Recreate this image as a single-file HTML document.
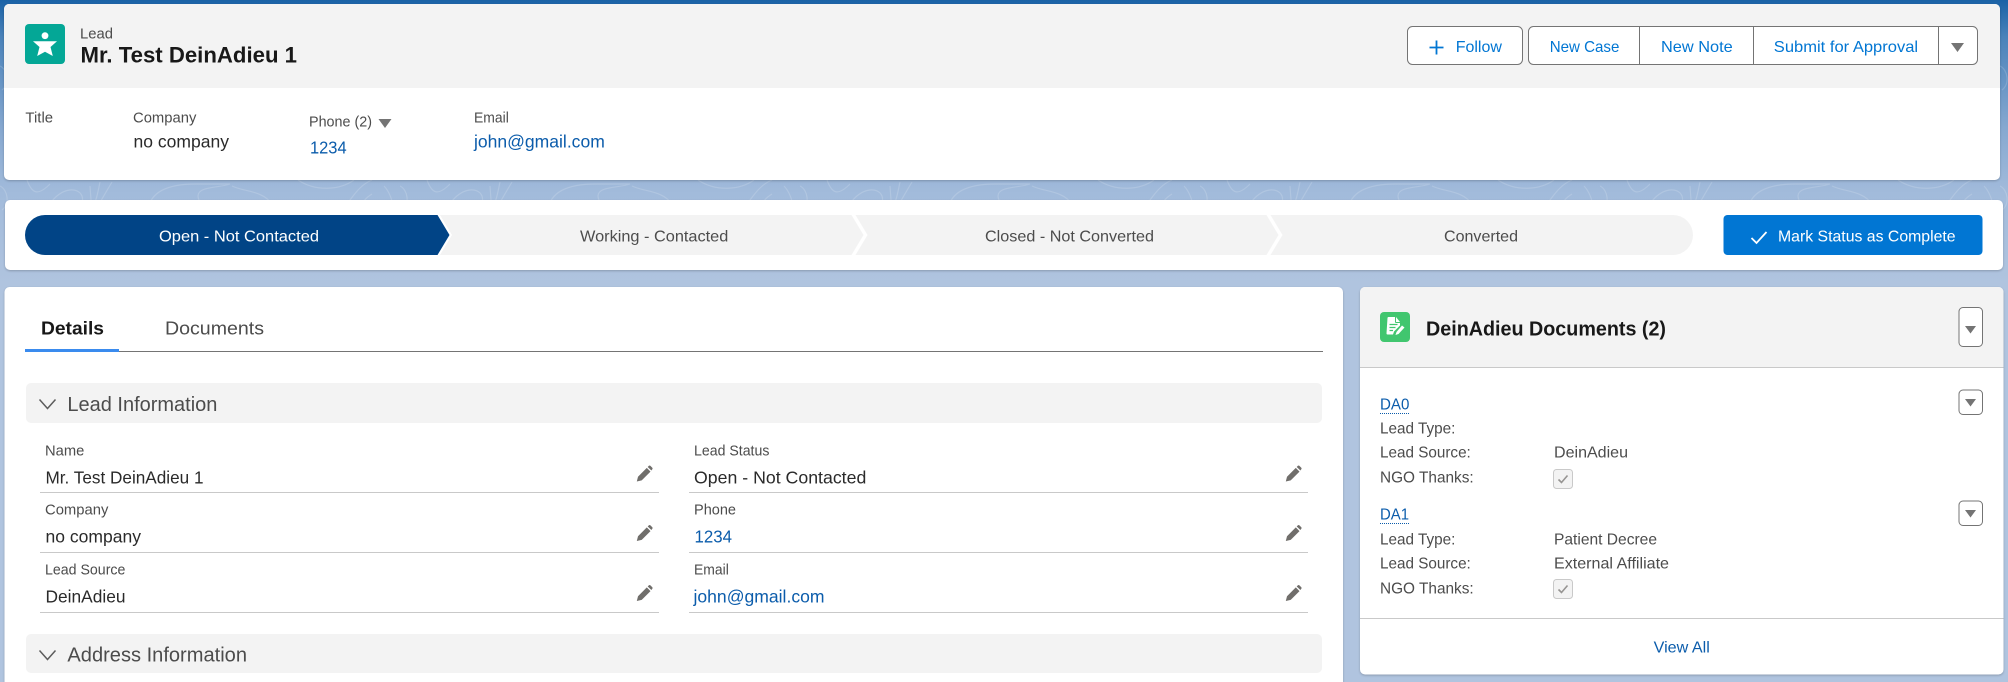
<!DOCTYPE html>
<html lang="en">
<head>
<meta charset="utf-8">
<title>Lead - Mr. Test DeinAdieu 1</title>
<style>
html,body{margin:0;padding:0;width:2008px;height:682px;overflow:hidden;background:#b0c4df}
svg{display:block;font-family:"Liberation Sans",sans-serif}
text{transform:translateY(-.7px)}
.l{font-size:15px;fill:#4c4c4c}
.v{font-size:17.5px;fill:#2a2a2a}
.a{font-size:17.5px;fill:#0b5cab}
.b{font-size:16px;fill:#0176d3}
.s{font-size:16px;fill:#4c4c4c}
.d{font-size:16px;fill:#4c4c4c}
.h{font-size:20px;fill:#4c4c4c}
.card{filter:drop-shadow(0 1.5px 1px rgba(0,0,0,.22))}
</style>
</head>
<body>
<svg width="2008" height="682" viewBox="0 0 2008 682" xmlns="http://www.w3.org/2000/svg">
<defs>
<linearGradient id="bg" x1="0" y1="0" x2="0" y2="1">
<stop offset="0" stop-color="#1a62a6"/>
<stop offset=".13" stop-color="#4a82ba"/>
<stop offset=".45" stop-color="#86a8d0"/>
<stop offset=".68" stop-color="#a2bbdb"/>
<stop offset="1" stop-color="#b0c4df"/>
</linearGradient>
<pattern id="topo" width="400" height="120" patternUnits="userSpaceOnUse" y="160">
<g fill="none" stroke="#fff" stroke-opacity=".16" stroke-width="1.2">
<path d="M0 26C8 30 10 44 2 50M27 20C32 34 38 36 50 24M50 44C60 28 78 26 82 36C84 42 80 48 78 60"/>
<path d="M90 26L91 40M100 22C98 32 96 42 92 50M112 22C106 32 100 42 96 50"/>
<path d="M148 50C150 34 164 24 196 24L230 24C220 28 198 26 198 36C198 44 210 50 216 50"/>
<path d="M165 50C172 38 186 40 196 50"/>
<path d="M232 26C244 32 262 30 272 44L278 54"/>
<path d="M298 20C316 32 340 30 354 20M300 50C320 44 340 50 350 40C356 32 362 24 372 20M372 34C362 40 362 46 358 52M394 50C392 38 388 30 384 26"/>
</g>
</pattern>
<linearGradient id="fade" x1="0" y1="0" x2="0" y2="1">
<stop offset="0" stop-color="#fff"/><stop offset=".72" stop-color="#fff"/><stop offset="1" stop-color="#000"/>
</linearGradient>
<mask id="m"><rect width="2008" height="290" fill="url(#fade)"/></mask>
<g id="pen"><path fill="#706e6b" d="M.3 16l1.2-4.8L10.3 2.4l3.7 3.7-8.8 8.8zM11.2 1.5L12.4.3c.4-.4 1-.4 1.4 0l2 2c.4.4.4 1 0 1.4L14.9 5z"/></g>
<path id="tri" fill="#747474" d="M0 0h13l-6.5 9z"/>
<g id="cb"><rect x="1.5" y=".5" width="19" height="19" rx="3" fill="#f3f3f3" stroke="#c9c9c9"/><path d="M6.5 10.5l3 3 6-7" fill="none" stroke="#969492" stroke-width="1.6"/></g>
<g id="ib"><rect x="1959" y="0" width="23.5" height="24.5" rx="4" fill="#fff" stroke="#747474"/><path fill="#747474" d="M1965 9h11l-5.500 7.500z"/></g>
</defs>

<!-- Page background -->
<rect width="2008" height="682" fill="#b0c4df"/>
<rect width="2008" height="285" fill="url(#bg)"/>
<rect width="2008" height="285" fill="url(#topo)" mask="url(#m)"/>

<!-- Highlights card -->
<rect class="card" x="4" y="4" width="1996" height="176" rx="5" fill="#fff"/>
<path d="M4 88V9a5 5 0 0 1 5-5H1995a5 5 0 0 1 5 5V88z" fill="#f3f3f3"/>
<rect x="25" y="24" width="40" height="40" rx="4" fill="#04a796"/>
<circle cx="45" cy="35.700" r="3.400" fill="#fff"/>
<path fill="#fff" d="M33 41.300H57L50.500 47 52.800 56 45 51.800 37.200 56 39.500 47z"/>
<text class="l" x="80" y="39" textLength="33" lengthAdjust="spacingAndGlyphs">Lead</text>
<text x="80.500" y="63.200" font-size="22.500" font-weight="700" fill="#181818" textLength="216.500" lengthAdjust="spacingAndGlyphs">Mr. Test DeinAdieu 1</text>

<rect x="1407.500" y="26.500" width="115" height="38" rx="5" fill="#fff" stroke="#747474"/>
<path d="M1436.500 40.500v14M1429.500 47.500h14" stroke="#0176d3" stroke-width="1.800" fill="none"/>
<text class="b" x="1455.700" y="52.500" textLength="46.200" lengthAdjust="spacingAndGlyphs">Follow</text>
<rect x="1528.500" y="26.500" width="449" height="38" rx="5" fill="#fff" stroke="#747474"/>
<path d="M1639.500 26.500v38M1753.500 26.500v38M1938.500 26.500v38" stroke="#747474"/>
<text class="b" x="1549.700" y="52.500" textLength="69.700" lengthAdjust="spacingAndGlyphs">New Case</text>
<text class="b" x="1661" y="52.500" textLength="71.700" lengthAdjust="spacingAndGlyphs">New Note</text>
<text class="b" x="1773.800" y="52.500" textLength="144.300" lengthAdjust="spacingAndGlyphs">Submit for Approval</text>
<use href="#tri" x="1951" y="43"/>

<text class="l" x="25.400" y="123.300" textLength="27.700" lengthAdjust="spacingAndGlyphs">Title</text>
<text class="l" x="133" y="123.300" textLength="63.400" lengthAdjust="spacingAndGlyphs">Company</text>
<text class="v" x="133.500" y="148.300" textLength="95.500" lengthAdjust="spacingAndGlyphs">no company</text>
<text class="l" x="309" y="127.300" textLength="63" lengthAdjust="spacingAndGlyphs">Phone (2)</text>
<use href="#tri" x="378.500" y="119"/>
<text class="a" x="310" y="154" textLength="36.600" lengthAdjust="spacingAndGlyphs">1234</text>
<text class="l" x="474" y="123.300" textLength="34.800" lengthAdjust="spacingAndGlyphs">Email</text>
<text class="a" x="474" y="148.300" textLength="130.800" lengthAdjust="spacingAndGlyphs">john@gmail.com</text>

<!-- Path card -->
<rect class="card" x="5" y="200" width="1998" height="70" rx="5" fill="#fff"/>
<path d="M45 215H437.500L449.500 235 437.500 255H45a20 20 0 0 1 0-40z" fill="#014486"/>
<path d="M440 215H851.500L863.500 235 851.500 255H440L452 235z" fill="#f3f3f3"/>
<path d="M855.500 215H1266.500L1278.500 235 1266.500 255H855.500L867.500 235z" fill="#f3f3f3"/>
<path d="M1270.500 215H1673a20 20 0 0 1 0 40H1270.500L1282.500 235z" fill="#f3f3f3"/>
<text x="159" y="242" font-size="16px" fill="#fff" textLength="160" lengthAdjust="spacingAndGlyphs">Open - Not Contacted</text>
<text class="s" x="580" y="242" textLength="148.300" lengthAdjust="spacingAndGlyphs">Working - Contacted</text>
<text class="s" x="985" y="242" textLength="169" lengthAdjust="spacingAndGlyphs">Closed - Not Converted</text>
<text class="s" x="1444" y="242" textLength="74" lengthAdjust="spacingAndGlyphs">Converted</text>
<rect x="1723.500" y="215" width="259" height="40" rx="4" fill="#0176d3"/>
<path d="M1751.500 238l5 5 10-11" fill="none" stroke="#fff" stroke-width="1.800"/>
<text x="1778" y="242" font-size="16px" fill="#fff" textLength="177.600" lengthAdjust="spacingAndGlyphs">Mark Status as Complete</text>

<!-- Details card -->
<rect class="card" x="4.500" y="287" width="1338.500" height="420" rx="5" fill="#fff"/>
<text x="41" y="335" font-size="18px" font-weight="700" fill="#181818" textLength="63" lengthAdjust="spacingAndGlyphs">Details</text>
<text x="165" y="335" font-size="18px" fill="#4c4c4c" textLength="99" lengthAdjust="spacingAndGlyphs">Documents</text>
<rect x="25" y="351" width="1298" height="1" fill="#747474"/>
<rect x="25" y="349" width="94" height="3" fill="#3a8bee"/>

<rect x="26" y="383" width="1296" height="40" rx="5" fill="#f3f3f3"/>
<path d="M39.500 399.500l8 9 8-9" fill="none" stroke="#5c5c5c" stroke-width="1.500"/>
<text class="h" x="67.400" y="411.700" textLength="150" lengthAdjust="spacingAndGlyphs">Lead Information</text>

<text class="l" x="45" y="456" textLength="39.300" lengthAdjust="spacingAndGlyphs">Name</text>
<text class="v" x="45.500" y="484" textLength="158" lengthAdjust="spacingAndGlyphs">Mr. Test DeinAdieu 1</text>
<rect x="40" y="492" width="619" height="1" fill="#c9c9c9"/>
<use href="#pen" x="636.500" y="465.500"/>
<text class="l" x="45" y="515.300" textLength="63.400" lengthAdjust="spacingAndGlyphs">Company</text>
<text class="v" x="45.500" y="543.300" textLength="95.500" lengthAdjust="spacingAndGlyphs">no company</text>
<rect x="40" y="552" width="619" height="1" fill="#c9c9c9"/>
<use href="#pen" x="636.500" y="525"/>
<text class="l" x="45" y="575.300" textLength="80.400" lengthAdjust="spacingAndGlyphs">Lead Source</text>
<text class="v" x="45.500" y="603.300" textLength="80" lengthAdjust="spacingAndGlyphs">DeinAdieu</text>
<rect x="40" y="612" width="619" height="1" fill="#c9c9c9"/>
<use href="#pen" x="636.500" y="585"/>

<text class="l" x="694" y="456" textLength="75.400" lengthAdjust="spacingAndGlyphs">Lead Status</text>
<text class="v" x="694" y="484" textLength="172.300" lengthAdjust="spacingAndGlyphs">Open - Not Contacted</text>
<rect x="689" y="492" width="619" height="1" fill="#c9c9c9"/>
<use href="#pen" x="1285.500" y="465.500"/>
<text class="l" x="694" y="515.300" textLength="42" lengthAdjust="spacingAndGlyphs">Phone</text>
<text class="a" x="694.500" y="543" textLength="37.500" lengthAdjust="spacingAndGlyphs">1234</text>
<rect x="689" y="552" width="619" height="1" fill="#c9c9c9"/>
<use href="#pen" x="1285.500" y="525"/>
<text class="l" x="694" y="575.300" textLength="34.800" lengthAdjust="spacingAndGlyphs">Email</text>
<text class="a" x="693.500" y="603.300" textLength="131" lengthAdjust="spacingAndGlyphs">john@gmail.com</text>
<rect x="689" y="612" width="619" height="1" fill="#c9c9c9"/>
<use href="#pen" x="1285.500" y="585"/>

<rect x="26" y="634" width="1296" height="39" rx="5" fill="#f3f3f3"/>
<path d="M39.500 650.500l8 9 8-9" fill="none" stroke="#5c5c5c" stroke-width="1.500"/>
<text class="h" x="67.400" y="662.300" textLength="179.600" lengthAdjust="spacingAndGlyphs">Address Information</text>

<!-- Documents card -->
<rect class="card" x="1360" y="287" width="643.500" height="387.500" rx="5" fill="#fff"/>
<path d="M1360 367V292a5 5 0 0 1 5-5H1998.500a5 5 0 0 1 5 5V367z" fill="#f3f3f3"/>
<rect x="1360" y="367" width="643.500" height="1" fill="#c9c9c9"/>
<rect x="1380" y="312" width="30" height="30" rx="4" fill="#41c66f"/>
<path fill="#fff" d="M1387.500 318a1 1 0 0 1 1-1h6.500v5a1 1 0 0 0 1 1h4v2.500l-6 6-1 3h-5.500a1 1 0 0 1-1-1zM1396 317l4 5h-4z"/>
<path d="M1389.500 324.500h8M1389.500 327.500h6M1389.500 330.500h3.500" stroke="#41c66f" stroke-width="1.300" fill="none"/>
<path fill="#fff" d="M1402 325.500l2.500 2-6 6.500-3 1 1-3z"/>
<text x="1426" y="336" font-size="20px" font-weight="700" fill="#181818" textLength="240" lengthAdjust="spacingAndGlyphs">DeinAdieu Documents (2)</text>
<rect x="1959" y="307.500" width="23.500" height="39" rx="4" fill="#fff" stroke="#747474"/>
<path fill="#747474" d="M1965 326h11l-5.500 7.500z"/>

<use href="#ib" y="390"/>
<text class="d" x="1380" y="410.300" style="fill:#0b5cab" textLength="29.400" lengthAdjust="spacingAndGlyphs">DA0</text>
<path d="M1380 413.500h29.500" stroke="#0b5cab" stroke-dasharray="1 1" fill="none"/>
<text class="d" x="1380" y="434.300" textLength="75.400" lengthAdjust="spacingAndGlyphs">Lead Type:</text>
<text class="d" x="1380" y="458.300" textLength="90.800" lengthAdjust="spacingAndGlyphs">Lead Source:</text>
<text class="d" x="1554" y="458.300" textLength="74" lengthAdjust="spacingAndGlyphs">DeinAdieu</text>
<text class="d" x="1380" y="483.300" textLength="93.700" lengthAdjust="spacingAndGlyphs">NGO Thanks:</text>
<use href="#cb" x="1552" y="469"/>

<use href="#ib" y="501"/>
<text class="d" x="1380" y="520.300" style="fill:#0b5cab" textLength="29" lengthAdjust="spacingAndGlyphs">DA1</text>
<path d="M1380 523.500h29.500" stroke="#0b5cab" stroke-dasharray="1 1" fill="none"/>
<text class="d" x="1380" y="545" textLength="75.400" lengthAdjust="spacingAndGlyphs">Lead Type:</text>
<text class="d" x="1554" y="545" textLength="103" lengthAdjust="spacingAndGlyphs">Patient Decree</text>
<text class="d" x="1380" y="569.300" textLength="90.800" lengthAdjust="spacingAndGlyphs">Lead Source:</text>
<text class="d" x="1554" y="569.300" textLength="115" lengthAdjust="spacingAndGlyphs">External Affiliate</text>
<text class="d" x="1380" y="594.300" textLength="93.700" lengthAdjust="spacingAndGlyphs">NGO Thanks:</text>
<use href="#cb" x="1552" y="579"/>

<rect x="1360" y="618" width="643.500" height="1" fill="#c9c9c9"/>
<text x="1653.600" y="653.300" font-size="16px" fill="#0b5cab" textLength="56.200" lengthAdjust="spacingAndGlyphs">View All</text>
</svg>
</body>
</html>
